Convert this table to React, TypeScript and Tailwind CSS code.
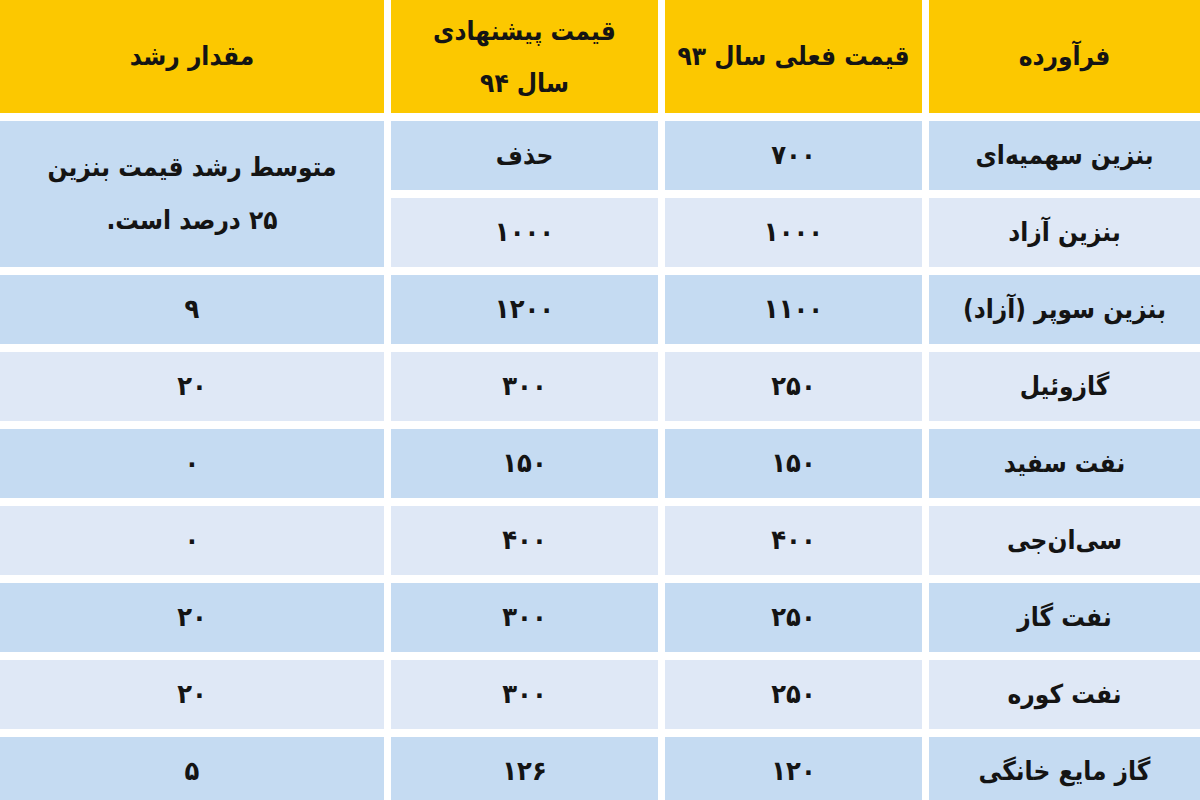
import React from "react";

type Row = {
  name: string;
  current: string;
  proposed: string;
  growth?: string;
};

const ROWS: Row[] = [
  { name: "بنزین سهمیه‌ای", current: "۷۰۰", proposed: "حذف" },
  { name: "بنزین آزاد", current: "۱۰۰۰", proposed: "۱۰۰۰" },
  { name: "بنزین سوپر (آزاد)", current: "۱۱۰۰", proposed: "۱۲۰۰", growth: "۹" },
  { name: "گازوئیل", current: "۲۵۰", proposed: "۳۰۰", growth: "۲۰" },
  { name: "نفت سفید", current: "۱۵۰", proposed: "۱۵۰", growth: "۰" },
  { name: "سی‌ان‌جی", current: "۴۰۰", proposed: "۴۰۰", growth: "۰" },
  { name: "نفت گاز", current: "۲۵۰", proposed: "۳۰۰", growth: "۲۰" },
  { name: "نفت کوره", current: "۲۵۰", proposed: "۳۰۰", growth: "۲۰" },
  { name: "گاز مایع خانگی", current: "۱۲۰", proposed: "۱۲۶", growth: "۵" },
];

const font = "font-['DejaVu_Sans_Condensed','DejaVu_Sans',sans-serif] font-bold text-[#141414]";

function Cell({ children, dark, num }: { children: React.ReactNode; dark: boolean; num?: boolean }) {
  return (
    <div
      className={`flex items-center justify-center ${num ? "text-[27px] tracking-[6px]" : "text-[26px]"} ${
        dark ? "bg-[#c5dbf2]" : "bg-[#dfe8f6]"
      }`}
    >
      {children}
    </div>
  );
}

export default function App() {
  return (
    <div className="h-[800px] w-[1200px] overflow-hidden bg-white">
      <div
        dir="rtl"
        className={`grid grid-cols-[271px_257px_267px_384px] grid-rows-[113px_repeat(9,69px)] gap-x-[7px] gap-y-[8px] ${font}`}
      >
        {/* header */}
        <div className="flex items-center justify-center bg-[#fcc800] text-[26px]">فرآورده</div>
        <div className="flex items-center justify-center bg-[#fcc800] text-[26px]">قیمت فعلی سال ۹۳</div>
        <div className="flex flex-col items-center justify-center bg-[#fcc800] text-[26px] leading-[52px]">
          <span>قیمت پیشنهادی</span>
          <span>سال ۹۴</span>
        </div>
        <div className="flex items-center justify-center bg-[#fcc800] text-[26px]">مقدار رشد</div>

        {ROWS.map((r, i) => {
          const dark = i % 2 === 0;
          return (
            <React.Fragment key={r.name}>
              <Cell dark={dark}>{r.name}</Cell>
              <Cell dark={dark} num>
                {r.current}
              </Cell>
              <Cell dark={dark} num={r.proposed !== "حذف"}>
                {r.proposed}
              </Cell>
              {i === 0 && (
                <div className="row-span-2 flex flex-col items-center justify-center bg-[#c5dbf2] text-[26px] leading-[53px]">
                  <span>متوسط رشد قیمت بنزین</span>
                  <span>۲۵ درصد است.</span>
                </div>
              )}
              {r.growth !== undefined && (
                <Cell dark={dark} num>
                  {r.growth}
                </Cell>
              )}
            </React.Fragment>
          );
        })}
      </div>
    </div>
  );
}
